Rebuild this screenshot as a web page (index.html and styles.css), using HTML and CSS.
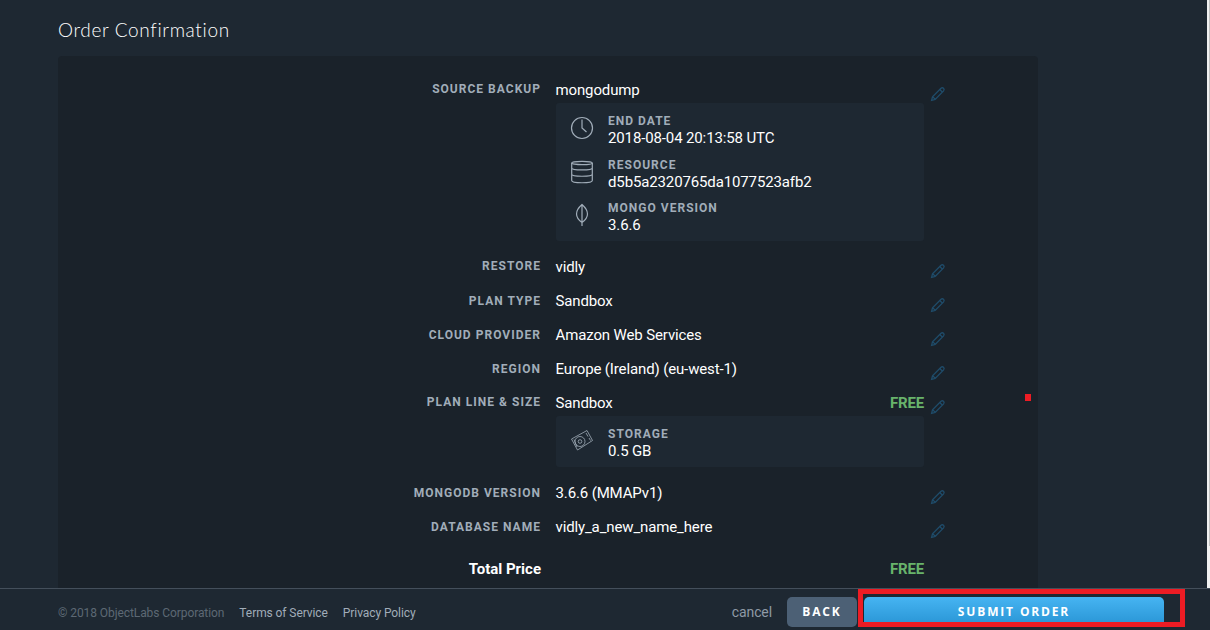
FILE: index.html
```html
<!DOCTYPE html>
<html lang="en">
<head>
<meta charset="utf-8">
<title>Order Confirmation</title>
<link rel="stylesheet" href="styles.css">
</head>
<body>
<svg class="defs" width="0" height="0">
  <symbol id="pencil" viewBox="0 0 16 16"><path d="M1.600 14.400l.9-3.600L11 2.300q1.300-1.100 2.500 0t.1 2.600L5.200 13.400z M9.800 3.500l2.700 2.700M2.800 10.900l2.400 2.400"/></symbol>
</svg>
<div class="page">
  <main class="content">
    <h1 class="title">Order Confirmation</h1>
    <section class="panel">
      <div class="row row-boxed">
        <div class="label">Source Backup</div>
        <div class="value">
          <div class="line">mongodump</div>
          <div class="box">
            <div class="item">
              <svg class="icon" viewBox="0 0 24 24"><circle cx="12" cy="12" r="10.500"/><path d="M12 3.500V12l4.500 4"/></svg>
              <div><div class="caption">End Date</div><div class="detail">2018-08-04 20:13:58 UTC</div></div>
            </div>
            <div class="item">
              <svg class="icon" viewBox="0 0 24 24"><ellipse cx="12" cy="3" rx="10.300" ry="1.700"/><path d="M1.700 3v17.500c0 3 20.600 3 20.600 0V3M1.700 8c0 2.600 20.600 2.600 20.600 0M1.700 14.300c0 2.600 20.600 2.600 20.600 0"/></svg>
              <div><div class="caption">Resource</div><div class="detail">d5b5a2320765da1077523afb2</div></div>
            </div>
            <div class="item">
              <svg class="icon" viewBox="0 0 24 24"><path d="M12 1.500C4.700 8 4.700 14 12 19.500C19.300 14 19.300 8 12 1.500zM12 2v21"/></svg>
              <div><div class="caption">Mongo Version</div><div class="detail">3.6.6</div></div>
            </div>
          </div>
        </div>
        <svg class="edit"><use href="#pencil"/></svg>
      </div>
      <div class="row"><div class="label">Restore</div><div class="value line">vidly</div><svg class="edit"><use href="#pencil"/></svg></div>
      <div class="row"><div class="label low">Plan Type</div><div class="value line">Sandbox</div><svg class="edit"><use href="#pencil"/></svg></div>
      <div class="row"><div class="label low">Cloud Provider</div><div class="value line">Amazon Web Services</div><svg class="edit"><use href="#pencil"/></svg></div>
      <div class="row"><div class="label low">Region</div><div class="value line">Europe (Ireland) (eu-west-1)</div><svg class="edit"><use href="#pencil"/></svg></div>
      <div class="row row-boxed">
        <div class="label">Plan Line &amp; Size</div>
        <div class="value">
          <div class="line priced"><span>Sandbox</span><span class="free">FREE</span></div>
          <div class="box box-small">
            <div class="item">
              <svg class="icon icon-disk" viewBox="0 0 24 24"><path d="M1.500 10L17 1.500l5.500 10L7.500 21z"/><circle cx="10" cy="12.500" r="5"/><circle cx="10" cy="12.500" r="1.800"/><path d="M4 10.500l3 7.500M16 4l2 3.500M19 9l1.500 2.500"/></svg>
              <div><div class="caption">Storage</div><div class="detail">0.5 GB</div></div>
            </div>
          </div>
        </div>
        <svg class="edit"><use href="#pencil"/></svg>
      </div>
      <div class="row"><div class="label low">MongoDB Version</div><div class="value line">3.6.6 (MMAPv1)</div><svg class="edit"><use href="#pencil"/></svg></div>
      <div class="row"><div class="label low">Database Name</div><div class="value line">vidly_a_new_name_here</div><svg class="edit"><use href="#pencil"/></svg></div>
      <div class="row row-total"><div class="total">Total Price</div><div class="value line priced"><span></span><span class="free">FREE</span></div></div>
      <span class="mark"></span>
    </section>
  </main>
  <div class="scrollbar"><div class="thumb"></div></div>
</div>
<footer class="footer">
  <div class="legal"><span class="copy">© 2018 ObjectLabs Corporation</span><a class="tos">Terms of Service</a><a>Privacy Policy</a></div>
  <div class="actions">
    <a class="cancel">cancel</a>
    <button class="btn back">BACK</button>
    <button class="btn submit">SUBMIT ORDER</button>
  </div>
  <div class="highlight"></div>
</footer>
</body>
</html>
```
FILE: styles.css
```css
* { box-sizing: border-box; }
body {
  margin: 0;
  width: 1210px;
  height: 630px;
  overflow: hidden;
  display: flex;
  flex-direction: column;
  background: #1e2832;
  color: #fff;
  font: 15px Roboto, sans-serif;
}
.defs { position: absolute; }
.page { display: flex; height: 588px; }
.content { flex: 1; padding-left: 58px; }
.title {
  margin: 0;
  height: 56px;
  padding-top: 18px;
  font: 300 19px/24px Lato, sans-serif;
  letter-spacing: .65px;
  font-variant-ligatures: none;
}
.panel {
  position: relative;
  width: 980px;
  height: 532px;
  padding-top: 21px;
  background: #1a222a;
  border-radius: 4px 4px 0 0;
}
.row {
  display: grid;
  grid-template-columns: 483px 368px 16px;
  column-gap: 15px;
  margin-bottom: 8px;
}
.row-boxed { margin-bottom: 13px; }
.label, .caption {
  color: #a1adb9;
  font-weight: 700;
  font-size: 12px;
  letter-spacing: 1.020px;
  text-transform: uppercase;
}
.label { text-align: right; line-height: 24px; }
.low { padding-top: 1px; }
.line { height: 26px; line-height: 26px; text-indent: -.5px; }
.line, .detail { letter-spacing: -.13px; }
.priced { display: flex; justify-content: space-between; }
.free { color: #68b36b; font-weight: 700; letter-spacing: -.2px; }
.box {
  height: 138px;
  padding: 11px 14px;
  background: #1e2832;
  border-radius: 3px;
}
.box-small { height: 51px; }
.item { display: flex; gap: 14px; height: 43.500px; }
.icon {
  width: 24px;
  height: 24px;
  margin-top: 2px;
  fill: none;
  stroke: #a1adb9;
  stroke-width: 1.200;
}
.icon-disk { stroke-width: .8; }
.caption { line-height: 14px; }
.detail { line-height: 21px; }
.edit {
  width: 16px;
  height: 16px;
  margin: 9px 0 0 -9px;
  fill: none;
  stroke: #1f4c6a;
  stroke-width: 1.300;
}
.row:not(.row-boxed) .edit { margin-bottom: -10px; }
.row-total { padding-top: 8px; }
.total { text-align: right; font-weight: 700; line-height: 26px; }
.mark {
  position: absolute;
  left: 967px;
  top: 338px;
  width: 6px;
  height: 7px;
  background: #ed1c24;
}
.scrollbar { width: 3px; padding-left: 2px; background: #f1f1f1; }
.thumb { height: 546px; background: #c1c1c1; }
.footer {
  position: relative;
  height: 42px;
  display: flex;
  justify-content: space-between;
  padding: 0 46px 0 58px;
  border-top: 1px solid #444f5b;
  background: #1e2832;
}
.legal { display: flex; gap: 15px; font-size: 12px; line-height: 48px; letter-spacing: -.08px; color: #a1adb9; }
.copy { color: #5d6874; }
.actions { display: flex; padding-top: 8px; }
.cancel { margin-right: 15px; font-size: 14px; line-height: 31px; letter-spacing: -.1px; color: #8f9aa6; }
.btn {
  border: 0;
  padding: 0;
  color: #fff;
  font: 700 12px/28px "Open Sans", sans-serif;
  letter-spacing: 1.850px;
}
.back { width: 70px; height: 30px; margin-right: 7px; border-radius: 5px; background: #4c6075; }
.submit {
  width: 300px;
  height: 30px;
  border-radius: 5px;
  background: linear-gradient(#46b4f2, #2793d3);
}
.highlight {
  position: absolute;
  left: 858px;
  top: 0;
  width: 327px;
  height: 38px;
  border: 5px solid #ed1c24;
}
```
